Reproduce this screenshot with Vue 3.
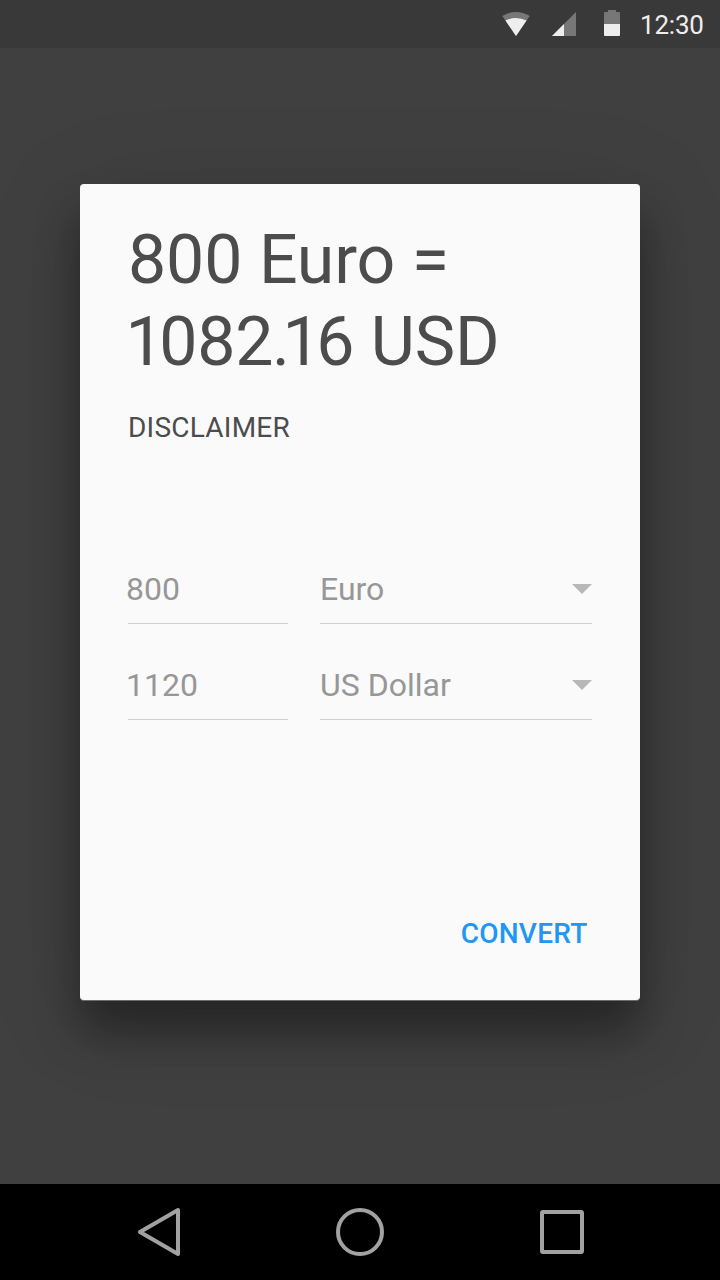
<script setup>
const rows = [
  { amount: '800', currency: 'Euro' },
  { amount: '1120', currency: 'US Dollar' },
]
</script>

<template>
  <div class="screen">
    <header class="status">
      <svg class="wifi" width="28" height="24" viewBox="0 0 28 24">
        <path d="M.3 4Q14-4 27.700 4L14 24Z" fill="#777" />
        <path d="M3.400 8.500Q14 3.300 24.600 8.500L14 24Z" fill="#eee" />
      </svg>
      <svg class="signal" width="24" height="24" viewBox="0 0 24 24">
        <path d="M0 24L24 0V24Z" fill="#777" />
        <path d="M0 24L12 12V24Z" fill="#eee" />
      </svg>
      <svg class="battery" width="16" height="26" viewBox="0 0 16 26">
        <path d="M0 14V3Q0 2 1 2H4V0H12V2H15Q16 2 16 3V14Z" fill="#777" />
        <path d="M0 14H16V25Q16 26 15 26H1Q0 26 0 25Z" fill="#eee" />
      </svg>
      <span class="time">12:30</span>
    </header>
    <main class="content">
      <section class="dialog">
        <h1>
          <span class="line source">800 Euro =</span>
          <span class="line result"><span class="one">1</span>08<span class="two">2</span><span class="point">.</span><span class="one">1</span>6 USD</span>
        </h1>
        <p class="disclaimer">DISCLAIMER</p>
        <div class="fields">
          <div v-for="row in rows" :key="row.currency" class="row">
            <div class="field amount"><span>{{ row.amount }}</span></div>
            <div class="field currency">
              <span>{{ row.currency }}</span>
              <svg width="20" height="10" viewBox="0 0 20 10"><path d="M0 0H20L10 10Z" fill="#b8b8b8" /></svg>
            </div>
          </div>
        </div>
        <button class="convert">CONVERT</button>
      </section>
    </main>
    <nav class="nav">
      <svg width="44" height="50" viewBox="0 0 44 50"><path d="M41 3V47L3 25Z" /></svg>
      <svg class="home" width="48" height="48" viewBox="0 0 48 48"><circle cx="24" cy="24" r="22" /></svg>
      <svg class="recent" width="44" height="44" viewBox="0 0 44 44"><rect x="2" y="2" width="40" height="40" rx="1" /></svg>
    </nav>
  </div>
</template>

<style>
body { margin: 0; }
</style>

<style scoped>
.screen {
  width: 720px;
  height: 1280px;
  display: flex;
  flex-direction: column;
  overflow: hidden;
  background: #404040;
  font-family: Roboto, sans-serif;
}
svg { flex-shrink: 0; }
.status {
  height: 48px;
  box-sizing: border-box;
  display: flex;
  align-items: flex-start;
  padding: 10px 0 0 502px;
  background: #393939;
}
.wifi { margin-top: 2px; }
.signal { margin: 2px 0 0 22px; }
.battery { margin-left: 28px; }
.time { margin-left: 20px; color: #eee; font-size: 26px; line-height: 30px; letter-spacing: -.2px; white-space: nowrap; }
.content { flex: 1; padding: 136px 80px 0; }
.dialog {
  height: 816px;
  box-sizing: border-box;
  padding: 35px 48px 38px;
  display: flex;
  flex-direction: column;
  border-radius: 4px;
  background: #fafafa;
  box-shadow: 0 1px 0 #6c6c6c, 0 32px 44px rgba(0, 0, 0, .36), 0 16px 100px rgba(0, 0, 0, .13);
}
h1 { margin: 0; color: #4c4c4c; font-size: 68px; font-weight: 400; line-height: 82px; white-space: nowrap; }
.line { display: block; }
.source { letter-spacing: -.15px; }
.result { margin-left: -2.500px; letter-spacing: -.2px; }
.one { letter-spacing: -4.500px; }
.two { letter-spacing: -1.500px; }
.point { letter-spacing: -7.500px; }
.disclaimer { margin: 29px 0 0; color: #4c4c4c; font-size: 28px; line-height: 32px; letter-spacing: .23px; }
.fields { margin-top: 95px; }
.row { display: flex; gap: 32px; height: 96px; }
.field {
  height: 85px;
  box-sizing: border-box;
  display: flex;
  align-items: center;
  justify-content: space-between;
  padding-top: 16px;
  border-bottom: 1px solid #cfcfcf;
  color: #979797;
  font-size: 32px;
}
.amount { width: 160px; }
.amount span { margin-left: -2px; }
.currency { width: 272px; }
.convert {
  margin: auto 4.500px 0 auto;
  padding: 0;
  border: 0;
  background: none;
  color: #2196f3;
  font: 500 28px/56px Roboto, sans-serif;
  letter-spacing: .25px;
}
.nav {
  height: 96px;
  box-sizing: border-box;
  display: flex;
  align-items: center;
  padding-left: 137px;
  background: #000;
}
.nav svg { fill: none; stroke: #a2a2a2; stroke-width: 4; stroke-linejoin: round; }
.home { margin-left: 155px; }
.recent { margin-left: 156px; }
</style>
